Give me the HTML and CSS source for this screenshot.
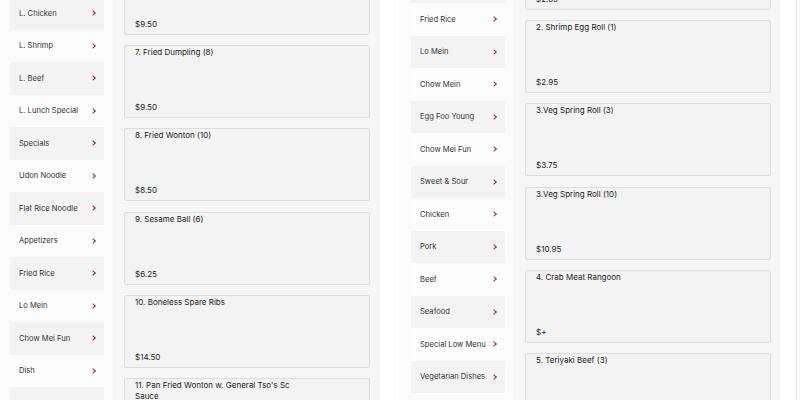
FILE: index.html
```html
<!DOCTYPE html>
<html>
<head>
<meta charset="utf-8">
<link rel="stylesheet" href="styles.css">
</head>
<body>
<div class="page">
  <section class="panel panel-left">
    <nav class="cats cats-left">
      <a class="cat dark">L. Chicken<i class="chev"></i></a>
      <a class="cat">L. Shrimp<i class="chev"></i></a>
      <a class="cat dark">L. Beef<i class="chev"></i></a>
      <a class="cat">L. Lunch Special<i class="chev"></i></a>
      <a class="cat dark">Specials<i class="chev"></i></a>
      <a class="cat">Udon Noodle<i class="chev"></i></a>
      <a class="cat dark">Flat Rice Noodle<i class="chev"></i></a>
      <a class="cat">Appetizers<i class="chev"></i></a>
      <a class="cat dark">Fried Rice<i class="chev"></i></a>
      <a class="cat">Lo Mein<i class="chev"></i></a>
      <a class="cat dark">Chow Mei Fun<i class="chev"></i></a>
      <a class="cat">Dish<i class="chev"></i></a>
      <a class="cat dark">Soup<i class="chev"></i></a>
    </nav>
    <div class="items">
      <div class="list list-left">
        <div class="card"><div class="name">6. Steamed Dumpling (8)</div><div class="price">$9.50</div></div>
        <div class="card"><div class="name">7. Fried Dumpling (8)</div><div class="price">$9.50</div></div>
        <div class="card"><div class="name">8. Fried Wonton (10)</div><div class="price">$8.50</div></div>
        <div class="card"><div class="name">9. Sesame Ball (6)</div><div class="price">$6.25</div></div>
        <div class="card"><div class="name">10. Boneless Spare Ribs</div><div class="price">$14.50</div></div>
        <div class="card"><div class="name">11. Pan Fried Wonton w. General Tso's Sc<br>Sauce</div><div class="price">$9.50</div></div>
      </div>
    </div>
  </section>
  <section class="panel panel-right">
    <nav class="cats cats-right">
      <a class="cat dark">Soup<i class="chev"></i></a>
      <a class="cat">Fried Rice<i class="chev"></i></a>
      <a class="cat dark">Lo Mein<i class="chev"></i></a>
      <a class="cat">Chow Mein<i class="chev"></i></a>
      <a class="cat dark">Egg Foo Young<i class="chev"></i></a>
      <a class="cat">Chow Mei Fun<i class="chev"></i></a>
      <a class="cat dark">Sweet &amp; Sour<i class="chev"></i></a>
      <a class="cat">Chicken<i class="chev"></i></a>
      <a class="cat dark">Pork<i class="chev"></i></a>
      <a class="cat">Beef<i class="chev"></i></a>
      <a class="cat dark">Seafood<i class="chev"></i></a>
      <a class="cat">Special Low Menu<i class="chev"></i></a>
      <a class="cat dark">Vegetarian Dishes<i class="chev"></i></a>
      <a class="cat">Diet Menu<i class="chev"></i></a>
    </nav>
    <div class="items">
      <div class="list list-right">
        <div class="card"><div class="name">1. Egg Roll (1)</div><div class="price">$2.85</div></div>
        <div class="card"><div class="name">2. Shrimp Egg Roll (1)</div><div class="price">$2.95</div></div>
        <div class="card"><div class="name">3.Veg Spring Roll (3)</div><div class="price">$3.75</div></div>
        <div class="card"><div class="name">3.Veg Spring Roll (10)</div><div class="price">$10.95</div></div>
        <div class="card"><div class="name">4. Crab Meat Rangoon</div><div class="price">$+</div></div>
        <div class="card"><div class="name">5. Teriyaki Beef (3)</div><div class="price">$7.50</div></div>
      </div>
    </div>
  </section>
  <section class="panel panel-edge"></section>
</div>
</body>
</html>
```
FILE: styles.css
```css
html, body {
  margin: 0;
  padding: 0;
  background: #ffffff;
  overflow: hidden;
  height: 400px;
}
body {
  font-family: "Inter", "Liberation Sans", sans-serif;
  font-size: 8px;
  color: #2a2a2a;
}
.page {
  display: flex;
  gap: 17px;
  margin-left: -2px;
  height: 400px;
  overflow: hidden;
}
.panel {
  flex: 0 0 382px;
  display: flex;
  gap: 9px;
  padding-left: 12px;
  box-sizing: border-box;
  background: #fbfbfb;
  height: 400px;
  overflow: hidden;
}
.panel-right {
  margin-left: 2px;
  margin-right: -2px;
}
.panel-edge {
  border-left: 1px solid #e6e6e6;
  background: #fafafa;
}
.cats {
  flex: 0 0 94px;
  display: flex;
  flex-direction: column;
}
.cats-left { margin-top: -3px; }
.cats-right { margin-top: -29.5px; }
.cat {
  flex: 0 0 32.5px;
  height: 32.5px;
  display: flex;
  align-items: center;
  justify-content: space-between;
  padding: 0 8px 0 9px;
  background: #fcfcfc;
  color: #333333;
  font-size: 7.6px;
  white-space: nowrap;
}
.cat.dark { background: #f3f3f3; }
.chev {
  width: 3px;
  height: 3px;
  border-right: 1.3px solid #a0283c;
  border-bottom: 1.3px solid #a0283c;
  transform: rotate(-45deg);
  margin-right: 1px;
}
.items {
  flex: 1;
  background: #f6f6f6;
  padding: 0 10px 0 11px;
  overflow: hidden;
}
.list {
  display: flex;
  flex-direction: column;
  gap: 10.33px;
}
.list-left { margin-top: -38.3px; }
.list-right { margin-top: -63.3px; }
.card {
  flex: 0 0 73px;
  height: 73px;
  box-sizing: border-box;
  border: 1px solid #dcdcdc;
  border-radius: 2px;
  background: #f3f3f3;
  padding: 1px 10px 4px 10px;
  display: flex;
  flex-direction: column;
  justify-content: space-between;
  color: #222;
}
.name { line-height: 11px; }
.price { line-height: 11px; }
```
